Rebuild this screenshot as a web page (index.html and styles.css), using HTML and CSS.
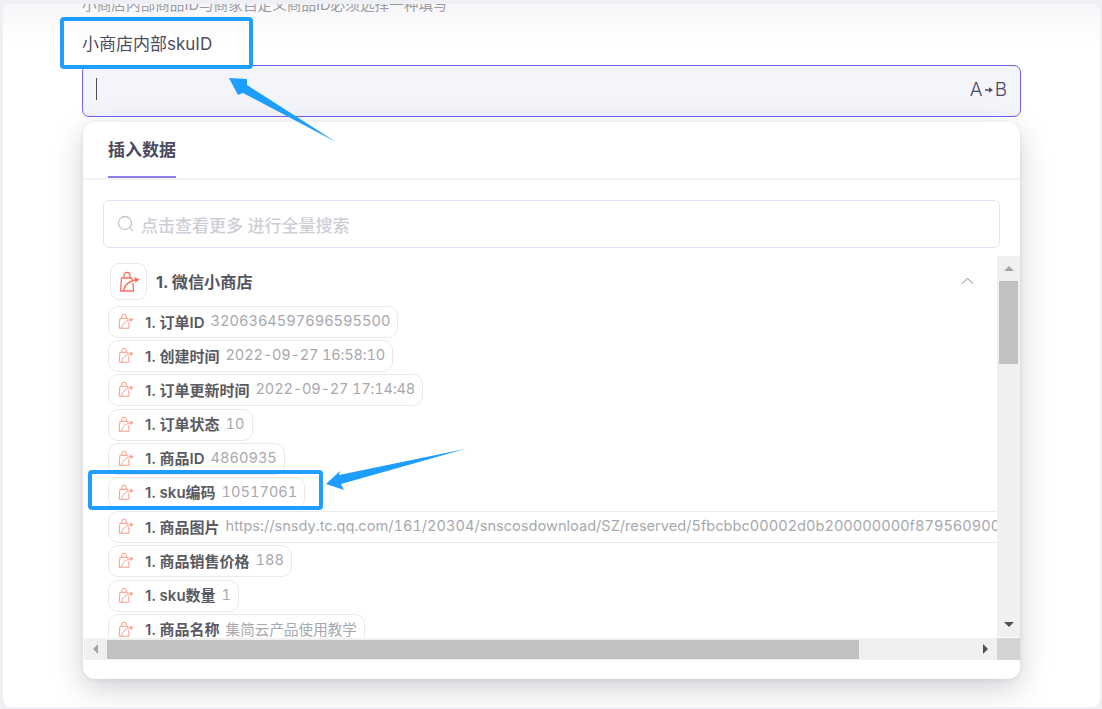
FILE: index.html
```html
<!DOCTYPE html>
<html lang="zh">
<head>
<meta charset="utf-8">
<title>插入数据</title>
<link rel="stylesheet" href="styles.css">
</head>
<body>
<svg width="0" height="0" class="defs">
  <symbol id="bag" viewBox="0 0 21 21">
    <path d="M14 12l.5 8H1.500l1-13h10.300l.3 2" fill="none" stroke="currentColor" stroke-width="1.300" stroke-linejoin="round"/>
    <path d="M5 7V4.500a3 3 0 0 1 6 0V7" fill="none" stroke="currentColor" stroke-width="1.300"/>
    <path d="M4.500 20c.8-5 4.500-9.500 11.500-11" fill="none" stroke="currentColor" stroke-width="1.300"/>
    <path d="M15.500 6l5 2.500-4 3.300z" fill="currentColor"/>
  </symbol>
</svg>
<main class="card">
  <p class="hint">小商店内部商品ID与商家自定义商品ID必须选择一种填写</p>
  <label class="field-label">小商店内部skuID</label>
  <div class="input">
    <span class="caret"></span>
    <span class="mode">A<svg class="mode-arrow" viewBox="0 0 10 10"><path d="M0 4.200h5V1.500L10 5 5 8.500V5.800H0z" fill="currentColor"/></svg>B</span>
  </div>
  <section class="popover">
    <div class="tabs"><span class="tab">插入数据</span></div>
    <div class="search">
      <svg class="search-icon" viewBox="0 0 18 18"><circle cx="8" cy="8" r="6.500" fill="none" stroke="currentColor" stroke-width="1.300"/><path d="M13 13l3 3" stroke="currentColor" stroke-width="1.300" fill="none"/></svg>
      <span>点击查看更多 进行全量搜索</span>
    </div>
    <div class="scroller">
      <div class="tree-row">
        <div class="tree">
          <div class="group">
            <span class="group-icon"><svg class="icon-lg"><use href="#bag"/></svg></span>
            <span class="group-name">1. 微信小商店</span>
            <svg class="chevron" viewBox="0 0 14 8"><path d="M1 7l6-6 6 6" fill="none" stroke="currentColor" stroke-width="1"/></svg>
          </div>
          <div class="chip"><svg class="icon-sm"><use href="#bag"/></svg><b>1. 订单ID</b><span>3206364597696595500</span></div>
          <div class="chip"><svg class="icon-sm"><use href="#bag"/></svg><b>1. 创建时间</b><span class="date">2022-09-27 16:58:10</span></div>
          <div class="chip"><svg class="icon-sm"><use href="#bag"/></svg><b>1. 订单更新时间</b><span class="date">2022-09-27 17:14:48</span></div>
          <div class="chip"><svg class="icon-sm"><use href="#bag"/></svg><b>1. 订单状态</b><span>10</span></div>
          <div class="chip"><svg class="icon-sm"><use href="#bag"/></svg><b>1. 商品ID</b><span>4860935</span></div>
          <div class="chip"><svg class="icon-sm"><use href="#bag"/></svg><b>1. sku编码</b><span>10517061</span></div>
          <div class="chip"><svg class="icon-sm"><use href="#bag"/></svg><b>1. 商品图片</b><span>https://snsdy.tc.qq.com/161/20304/snscosdownload/SZ/reserved/5fbcbbc00002d0b200000000f879560900000000000000000000</span></div>
          <div class="chip"><svg class="icon-sm"><use href="#bag"/></svg><b>1. 商品销售价格</b><span>188</span></div>
          <div class="chip"><svg class="icon-sm"><use href="#bag"/></svg><b>1. sku数量</b><span>1</span></div>
          <div class="chip"><svg class="icon-sm"><use href="#bag"/></svg><b>1. 商品名称</b><span>集简云产品使用教学</span></div>
        </div>
        <div class="vbar">
          <i class="tri tri-up"></i>
          <div class="vtrack"><div class="vthumb"></div></div>
          <i class="tri tri-down"></i>
        </div>
      </div>
      <div class="hbar-row">
        <div class="hbar">
          <i class="tri tri-left"></i>
          <div class="htrack"><div class="hthumb"></div></div>
          <i class="tri tri-right"></i>
        </div>
        <div class="corner"></div>
      </div>
    </div>
  </section>
</main>
<div class="mark mark-label"></div>
<div class="mark mark-chip"></div>
<svg class="arrows" viewBox="0 0 1102 709">
  <polygon points="229,78 247,79 247,85 336,142 243,93 238,95"/>
  <polygon points="326,484 340,471 339,475 465,449 341,484 344,490"/>
</svg>
</body>
</html>
```
FILE: styles.css
```css
* { box-sizing: border-box; }
html, body { height: 100%; }
body {
  margin: 0;
  padding: 4px 2px 2px 3px;
  display: flex;
  background: #eef0f5;
  font-family: Inter, "Noto Sans CJK SC", sans-serif;
  overflow: hidden;
}
.defs { position: absolute; }
.card {
  flex: 1;
  position: relative;
  overflow: hidden;
  padding: 0 79px;
  border-radius: 8px;
  background: linear-gradient(#f7f7f9, #ffffff 40px);
}
.hint {
  margin: -9px 0 0;
  height: 20px;
  font-size: 14.650px;
  line-height: 20px;
  color: #9a9aa2;
  white-space: nowrap;
}
.field-label {
  display: block;
  margin-top: 18px;
  height: 32px;
  font-size: 17px;
  line-height: 22px;
  color: #4d4d62;
}
.input {
  display: flex;
  align-items: center;
  justify-content: space-between;
  height: 52px;
  padding: 0 13px;
  background: #f4f5fa;
  border: 1px solid #6f62ee;
  border-radius: 7px;
}
.caret { width: 1px; height: 22px; background: #4a4a5a; margin-bottom: 4px; }
.mode {
  display: flex;
  align-items: center;
  margin-bottom: 3px;
  font-size: 19px;
  font-weight: 300;
  color: #4b4b66;
}
.mode-arrow { width: 8px; height: 8px; margin: 0 2px; }
.popover {
  margin: 5px 1px 0;
  height: 557px;
  display: flex;
  flex-direction: column;
  background: #fff;
  border-radius: 12px;
  box-shadow: 0 10px 30px rgba(30, 30, 50, .2), 0 1px 5px rgba(30, 30, 50, .08);
}
.tabs {
  height: 58px;
  padding-left: 25px;
  border-bottom: 2px solid #f3f3f6;
}
.tab {
  display: inline-block;
  height: 56px;
  padding-top: 16px;
  font-size: 17px;
  line-height: 24px;
  font-weight: 700;
  color: #4a4a60;
  border-bottom: 2px solid #8d80e4;
}
.search {
  display: flex;
  align-items: center;
  gap: 6px;
  margin: 20px 20px 0;
  height: 48px;
  padding-left: 13px;
  border: 1px solid #e4e0fb;
  border-radius: 6px;
  font-size: 17px;
  font-weight: 500;
  color: #cdced8;
}
.search-icon { width: 18px; height: 18px; color: #c4c6d0; }
.scroller {
  margin: 8px 0 0 1px;
  height: 404px;
  display: flex;
  flex-direction: column;
}
.tree-row { flex: 1; min-height: 0; display: flex; }
.tree {
  flex: 1;
  min-width: 0;
  overflow: hidden;
  padding: 7px 0 0 24px;
}
.group {
  display: flex;
  align-items: center;
  height: 36px;
  margin: 0 0 7px 2px;
  font-size: 16.200px;
  font-weight: 700;
  color: #55555f;
}
.group-icon {
  display: flex;
  align-items: center;
  justify-content: center;
  width: 37px;
  height: 37px;
  margin-right: 9px;
  padding-left: 2px;
  border: 1px solid #e8e8ec;
  border-radius: 9px;
  color: #fb6f5c;
}
.group-name { flex: 1; }
.chevron { width: 13px; height: 8px; margin-right: 23px; color: #777; }
.icon-lg { width: 21px; height: 21px; }
.icon-sm { width: 16px; height: 16px; margin-right: 11px; flex: none; color: #fb9a8a; }
.chip {
  display: flex;
  align-items: center;
  width: fit-content;
  height: 32px;
  margin-bottom: 2.200px;
  padding: 0 7px 2px 9px;
  border: 1px solid #e9e9ee;
  border-radius: 10px;
  font-size: 15px;
  white-space: nowrap;
}
.chip b { font-weight: 600; color: #5a5a62; margin-right: 6px; }
.chip span { font-size: 14.600px; font-variant-numeric: tabular-nums; color: #a8a8ae; }
.chip .date { letter-spacing: -.2px; }
.vbar {
  width: 23px;
  flex: none;
  display: flex;
  flex-direction: column;
  align-items: center;
  background: #f0f0f0;
}
.vtrack { flex: 1; width: 100%; padding: 3px 2px 0 2px; }
.vthumb { width: 19px; height: 83px; background: #c1c1c1; }
.tri { display: block; width: 0; height: 0; flex: none; border-style: solid; border-color: transparent; }
.tri-up { margin: 10px 0 7px; border-width: 0 5px 5px; border-bottom-color: #a4a4a4; }
.tri-down { margin: 7px 0 10px; border-width: 5px 5px 0; border-top-color: #505050; }
.hbar-row { display: flex; height: 23px; border-top: 1px solid #fff; }
.hbar {
  flex: 1;
  display: flex;
  align-items: center;
  padding: 0 9px;
  background: #f0f0f0;
}
.htrack { flex: 1; padding: 0 9px; }
.hthumb { width: 752px; height: 19px; background: #c1c1c1; }
.tri-left { border-width: 5px 5px 5px 0; border-right-color: #a4a4a4; }
.tri-right { border-width: 5px 0 5px 5px; border-left-color: #505050; }
.corner { width: 23px; flex: none; background: #d4d4d4; }
.mark {
  position: absolute;
  border: 4px solid #1e9fff;
  border-radius: 4px;
}
.mark-label { left: 60px; top: 17px; width: 193px; height: 52px; }
.mark-chip { left: 88px; top: 470px; width: 235px; height: 40px; }
.arrows {
  position: absolute;
  left: 0;
  top: 0;
  width: 1102px;
  height: 709px;
  fill: #1e9fff;
  pointer-events: none;
}
```
